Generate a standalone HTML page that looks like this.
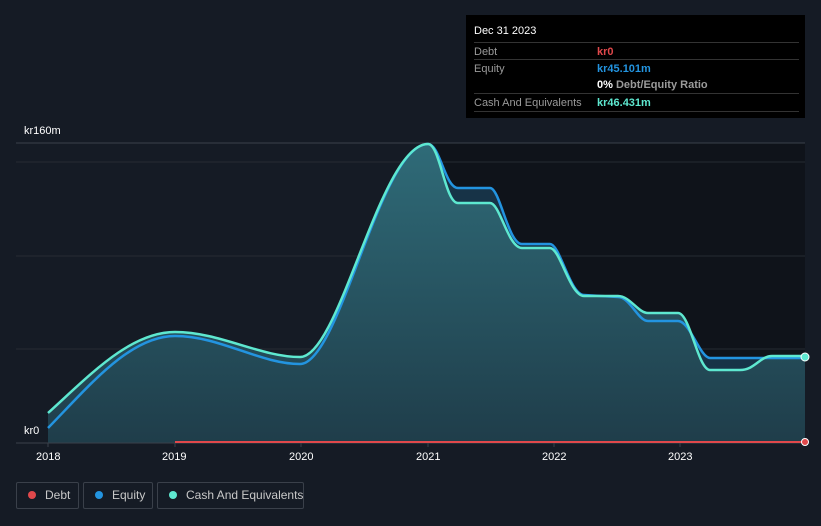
<!DOCTYPE html>
<html><head><style>
html,body{margin:0;padding:0;background:#151b25;width:821px;height:526px;overflow:hidden;font-family:"Liberation Sans",sans-serif;}
.tt{position:absolute;left:466px;top:15px;width:339px;height:103px;background:#000;color:#fff;font-size:11px;}
.row{position:absolute;left:8px;right:6px;border-top:1px solid #333;height:17px;}
.l{position:absolute;left:0;top:3px;color:#9a9a9a}
.v{position:absolute;left:123px;top:3px;font-weight:bold;white-space:nowrap}
.lg{position:absolute;top:482px;height:27px;border:1px solid #3a404a;border-radius:2px;color:#c8c8c8;font-size:12px;line-height:25px;box-sizing:border-box;white-space:nowrap;overflow:hidden}
.dot{display:inline-block;width:8px;height:8px;border-radius:50%;margin:0 9px 0 11px;vertical-align:0px}
.ax{position:absolute;color:#fff;font-size:11px}
</style></head><body>
<svg width="821" height="526" style="position:absolute;left:0;top:0">
<defs><linearGradient id="g" x1="0" y1="0" x2="0" y2="1"><stop offset="0" stop-color="#2f6b78"/><stop offset="1" stop-color="#1f3d4a"/></linearGradient></defs>
<rect x="428" y="143" width="377" height="300" fill="#0f131a"/>
<line x1="16" y1="143" x2="805" y2="143" stroke="#3a404a"/>
<line x1="16" y1="162" x2="805" y2="162" stroke="#262b33"/>
<line x1="16" y1="256" x2="805" y2="256" stroke="#262b33"/>
<line x1="16" y1="349" x2="805" y2="349" stroke="#262b33"/>
<path d="M48,428 C90,385 130,336 175,336 C220,336 260,364 300,364 C340,364 380,144 428,144 C440,144 445,188 458,188 L490,188 C500,188 508,244 522,244 L550,244 C560,244 570,295 584,295 L618,297 C630,297 638,321 648,321 L678,321 C690,321 700,358 710,358 L805,358 L805,443 L48,443Z" fill="#173347"/>
<path d="M48,413 C90,375 130,332 175,332 C220,332 260,357 300,357 C340,357 380,144 428,144 C440,144 445,203 458,203 L490,203 C500,203 508,248 522,248 L550,248 C560,248 570,296 584,296 L618,296 C630,296 638,313 648,313 L678,313 C690,313 698,370 710,370 L740,370 C755,370 760,356 772,356 L805,356 L805,443 L48,443Z" fill="url(#g)"/>
<path d="M48,428 C90,385 130,336 175,336 C220,336 260,364 300,364 C340,364 380,144 428,144 C440,144 445,188 458,188 L490,188 C500,188 508,244 522,244 L550,244 C560,244 570,295 584,295 L618,297 C630,297 638,321 648,321 L678,321 C690,321 700,358 710,358 L805,358" fill="none" stroke="#2394e0" stroke-width="2.5"/>
<path d="M48,413 C90,375 130,332 175,332 C220,332 260,357 300,357 C340,357 380,144 428,144 C440,144 445,203 458,203 L490,203 C500,203 508,248 522,248 L550,248 C560,248 570,296 584,296 L618,296 C630,296 638,313 648,313 L678,313 C690,313 698,370 710,370 L740,370 C755,370 760,356 772,356 L805,356" fill="none" stroke="#5ee8d0" stroke-width="2.5"/>
<line x1="16" y1="443" x2="805" y2="443" stroke="#3a404a"/>
<line x1="175" y1="442" x2="805" y2="442" stroke="#e0484b" stroke-width="2"/>
<circle cx="805" cy="442" r="3.5" fill="#e0484b" stroke="#fff" stroke-width="1"/>
<circle cx="805" cy="357" r="4" fill="#5ee8d0" stroke="#fff" stroke-width="1"/>
<g stroke="#3a404a"><line x1="48" y1="443" x2="48" y2="447"/><line x1="175" y1="443" x2="175" y2="447"/><line x1="301" y1="443" x2="301" y2="447"/><line x1="428" y1="443" x2="428" y2="447"/><line x1="554" y1="443" x2="554" y2="447"/><line x1="680" y1="443" x2="680" y2="447"/></g>
</svg>
<div class="ax" style="left:24px;top:125px">kr160m</div>
<div class="ax" style="left:24px;top:425px">kr0</div>
<div class="ax" style="left:36px;top:451px">2018</div>
<div class="ax" style="left:162px;top:451px">2019</div>
<div class="ax" style="left:289px;top:451px">2020</div>
<div class="ax" style="left:416px;top:451px">2021</div>
<div class="ax" style="left:542px;top:451px">2022</div>
<div class="ax" style="left:668px;top:451px">2023</div>
<div class="tt">
<div style="position:absolute;left:8px;top:10px">Dec 31 2023</div>
<div class="row" style="top:27px"><span class="l">Debt</span><span class="v" style="color:#e0484b">kr0</span></div>
<div class="row" style="top:44px"><span class="l">Equity</span><span class="v" style="color:#2394e0">kr45.101m</span></div>
<div class="row" style="top:61px;border-top:none"><span class="v" style="color:#fff">0% <span style="color:#9a9a9a;font-weight:bold">Debt/Equity Ratio</span></span></div>
<div class="row" style="top:78px;height:17px;border-bottom:1px solid #333"><span class="l">Cash And Equivalents</span><span class="v" style="color:#5ee8d0">kr46.431m</span></div>
</div>
<div class="lg" style="left:16px;width:63px"><span class="dot" style="background:#e0484b"></span>Debt</div>
<div class="lg" style="left:83px;width:70px"><span class="dot" style="background:#2394e0"></span>Equity</div>
<div class="lg" style="left:157px;width:147px"><span class="dot" style="background:#5ee8d0"></span>Cash And Equivalents</div>
</body></html>
